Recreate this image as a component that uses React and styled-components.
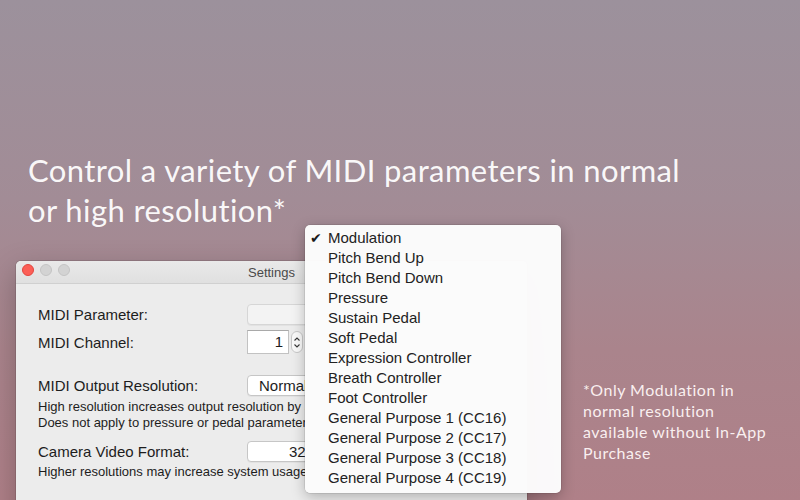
import React from 'react'
import styled, { createGlobalStyle } from 'styled-components'

const GlobalStyle = createGlobalStyle`
  html, body {
    margin: 0;
    padding: 0;
  }
  body {
    font-family: Lato, "Open Sans", sans-serif;
  }
`

const Page = styled.div`
  width: 800px;
  height: 500px;
  overflow: hidden;
  display: flex;
  flex-direction: column;
  background: linear-gradient(180deg, #9c919c 0%, #a28c96 40%, #aa848c 70%, #af8088 100%);
`

const Headline = styled.h1`
  margin: 150px 0 0 28px;
  font-family: Lato, "Open Sans", sans-serif;
  font-weight: 400;
  font-size: 31px;
  line-height: 40px;
  color: rgba(255, 255, 255, 0.95);
  letter-spacing: 0.4px;
`

const Stage = styled.div`
  position: relative;
  flex: 1;
  display: flex;
  align-items: flex-start;
`

const Window = styled.div`
  margin: 31px 0 0 16px;
  width: 511px;
  height: 260px;
  flex-shrink: 0;
  background: #ececec;
  border-radius: 5px 5px 0 0;
  box-shadow: 0 0 0 1px rgba(0, 0, 0, 0.1), 0 10px 30px rgba(0, 0, 0, 0.25);
  font-family: "Liberation Sans", Arial, sans-serif;
  color: #1d1d1d;
  overflow: hidden;
`

const TitleBar = styled.div`
  position: relative;
  height: 22px;
  display: flex;
  align-items: center;
  justify-content: center;
  background: linear-gradient(180deg, #e9e9e9, #e0e0e0);
  border-bottom: 1px solid #d0d0d0;
  font-size: 13px;
  color: #4a4a4a;
`

const Lights = styled.div`
  position: absolute;
  left: 6px;
  top: 3px;
  display: flex;
  gap: 6px;
`

const Light = styled.span`
  width: 12px;
  height: 12px;
  border-radius: 50%;
  box-sizing: border-box;
  background: ${p => (p.$close ? '#fc5f57' : '#d3d3d3')};
  border: 1px solid ${p => (p.$close ? '#e2463f' : '#c4c4c4')};
`

/* content area stops where the open menu covers it */
const Body = styled.div`
  width: 267px;
  overflow: hidden;
  padding: 18px 0 0 22px;
  display: flex;
  flex-direction: column;
`

const Row = styled.div`
  display: flex;
  align-items: center;
  height: 24px;
  margin-top: ${p => p.$gap || 0}px;
`

const Label = styled.div`
  width: 209px;
  flex-shrink: 0;
  font-size: 15px;
`

const PopupButton = styled.div`
  width: 200px;
  flex-shrink: 0;
  height: 21px;
  box-sizing: border-box;
  border-radius: 4px;
  border: 1px solid ${p => (p.$dim ? '#d6d6d6' : '#c6c6c6')};
  background: ${p => (p.$dim ? '#f3f3f3' : '#ffffff')};
  box-shadow: 0 1px 0 rgba(0, 0, 0, 0.04);
  font-size: 15px;
  line-height: 19px;
  padding-left: ${p => p.$indent || 11}px;
  white-space: nowrap;
`

const TextField = styled.div`
  width: ${p => p.$width}px;
  flex-shrink: 0;
  height: 24px;
  box-sizing: border-box;
  border: 1px solid #c2c2c2;
  border-top-color: #a9a9a9;
  background: #fff;
  font-size: 15px;
  line-height: 22px;
  text-align: right;
  padding-right: 5px;
`

const Stepper = styled.div`
  margin-left: 2px;
  width: 12px;
  flex-shrink: 0;
  height: 22px;
  box-sizing: border-box;
  border-radius: 6px;
  border: 1px solid #c8c8c8;
  background: #fafafa;
  display: flex;
  flex-direction: column;
  align-items: center;
  justify-content: center;
  gap: 3px;
`

const Hint = styled.div`
  font-size: 13px;
  line-height: 16px;
  margin-top: ${p => p.$gap || 0}px;
  white-space: nowrap;
`

const Menu = styled.ul`
  position: absolute;
  left: 305px;
  top: -5px;
  width: 256px;
  margin: 0;
  padding: 3px 0 5px;
  list-style: none;
  box-sizing: border-box;
  background: rgba(251, 251, 251, 0.99);
  border-radius: 5px;
  box-shadow: 0 0 0 0.5px rgba(0, 0, 0, 0.15), 0 4px 14px rgba(0, 0, 0, 0.25);
  font-family: "Liberation Sans", Arial, sans-serif;
  color: #222;
`

const MenuItem = styled.li`
  position: relative;
  height: 20px;
  line-height: 20px;
  padding-left: 23px;
  font-size: 15px;
  white-space: nowrap;
`

const Check = styled.span`
  position: absolute;
  left: 5px;
  top: 0;
  font-size: 14px;
  font-family: "DejaVu Sans", sans-serif;
  color: #1a1a1a;
`

const Note = styled.p`
  margin: 149px 0 0 56px;
  font-family: Lato, "Open Sans", sans-serif;
  font-size: 16px;
  line-height: 21px;
  color: rgba(255, 247, 247, 0.95);
  letter-spacing: 0.5px;
`

const Chevron = ({ up }) => (
  <svg width="6" height="4" viewBox="0 0 6 4">
    <path
      d={up ? 'M0.5 3.5 L3 1 L5.5 3.5' : 'M0.5 0.5 L3 3 L5.5 0.5'}
      fill="none"
      stroke="#3a3a3a"
      strokeWidth="1.1"
    />
  </svg>
)

const items = [
  'Modulation',
  'Pitch Bend Up',
  'Pitch Bend Down',
  'Pressure',
  'Sustain Pedal',
  'Soft Pedal',
  'Expression Controller',
  'Breath Controller',
  'Foot Controller',
  'General Purpose 1 (CC16)',
  'General Purpose 2 (CC17)',
  'General Purpose 3 (CC18)',
  'General Purpose 4 (CC19)',
]

const App = () => {
  return (
    <Page>
      <GlobalStyle />
      <Headline>
        Control a variety of MIDI parameters in normal
        <br />
        or high resolution*
      </Headline>
      <Stage>
        <Window>
          <TitleBar>
            <Lights>
              <Light $close />
              <Light />
              <Light />
            </Lights>
            Settings
          </TitleBar>
          <Body>
            <Row>
              <Label>MIDI Parameter:</Label>
              <PopupButton $dim />
            </Row>
            <Row $gap={4}>
              <Label>MIDI Channel:</Label>
              <TextField $width={42}>1</TextField>
              <Stepper>
                <Chevron up />
                <Chevron />
              </Stepper>
            </Row>
            <Row $gap={19}>
              <Label>MIDI Output Resolution:</Label>
              <PopupButton>Normal</PopupButton>
            </Row>
            <Hint $gap={2}>
              High resolution increases output resolution by a factor of 128.
              <br />
              Does not apply to pressure or pedal parameters.
            </Hint>
            <Row $gap={8}>
              <Label>Camera Video Format:</Label>
              <PopupButton $indent={41}>320 × 240</PopupButton>
            </Row>
            <Hint $gap={1}>Higher resolutions may increase system usage.</Hint>
          </Body>
        </Window>
        <Menu>
          {items.map((item, i) => (
            <MenuItem key={item}>
              {i === 0 && <Check>✔</Check>}
              {item}
            </MenuItem>
          ))}
        </Menu>
        <Note>
          *Only Modulation in
          <br />
          normal resolution
          <br />
          available without In-App
          <br />
          Purchase
        </Note>
      </Stage>
    </Page>
  )
}

export default App
